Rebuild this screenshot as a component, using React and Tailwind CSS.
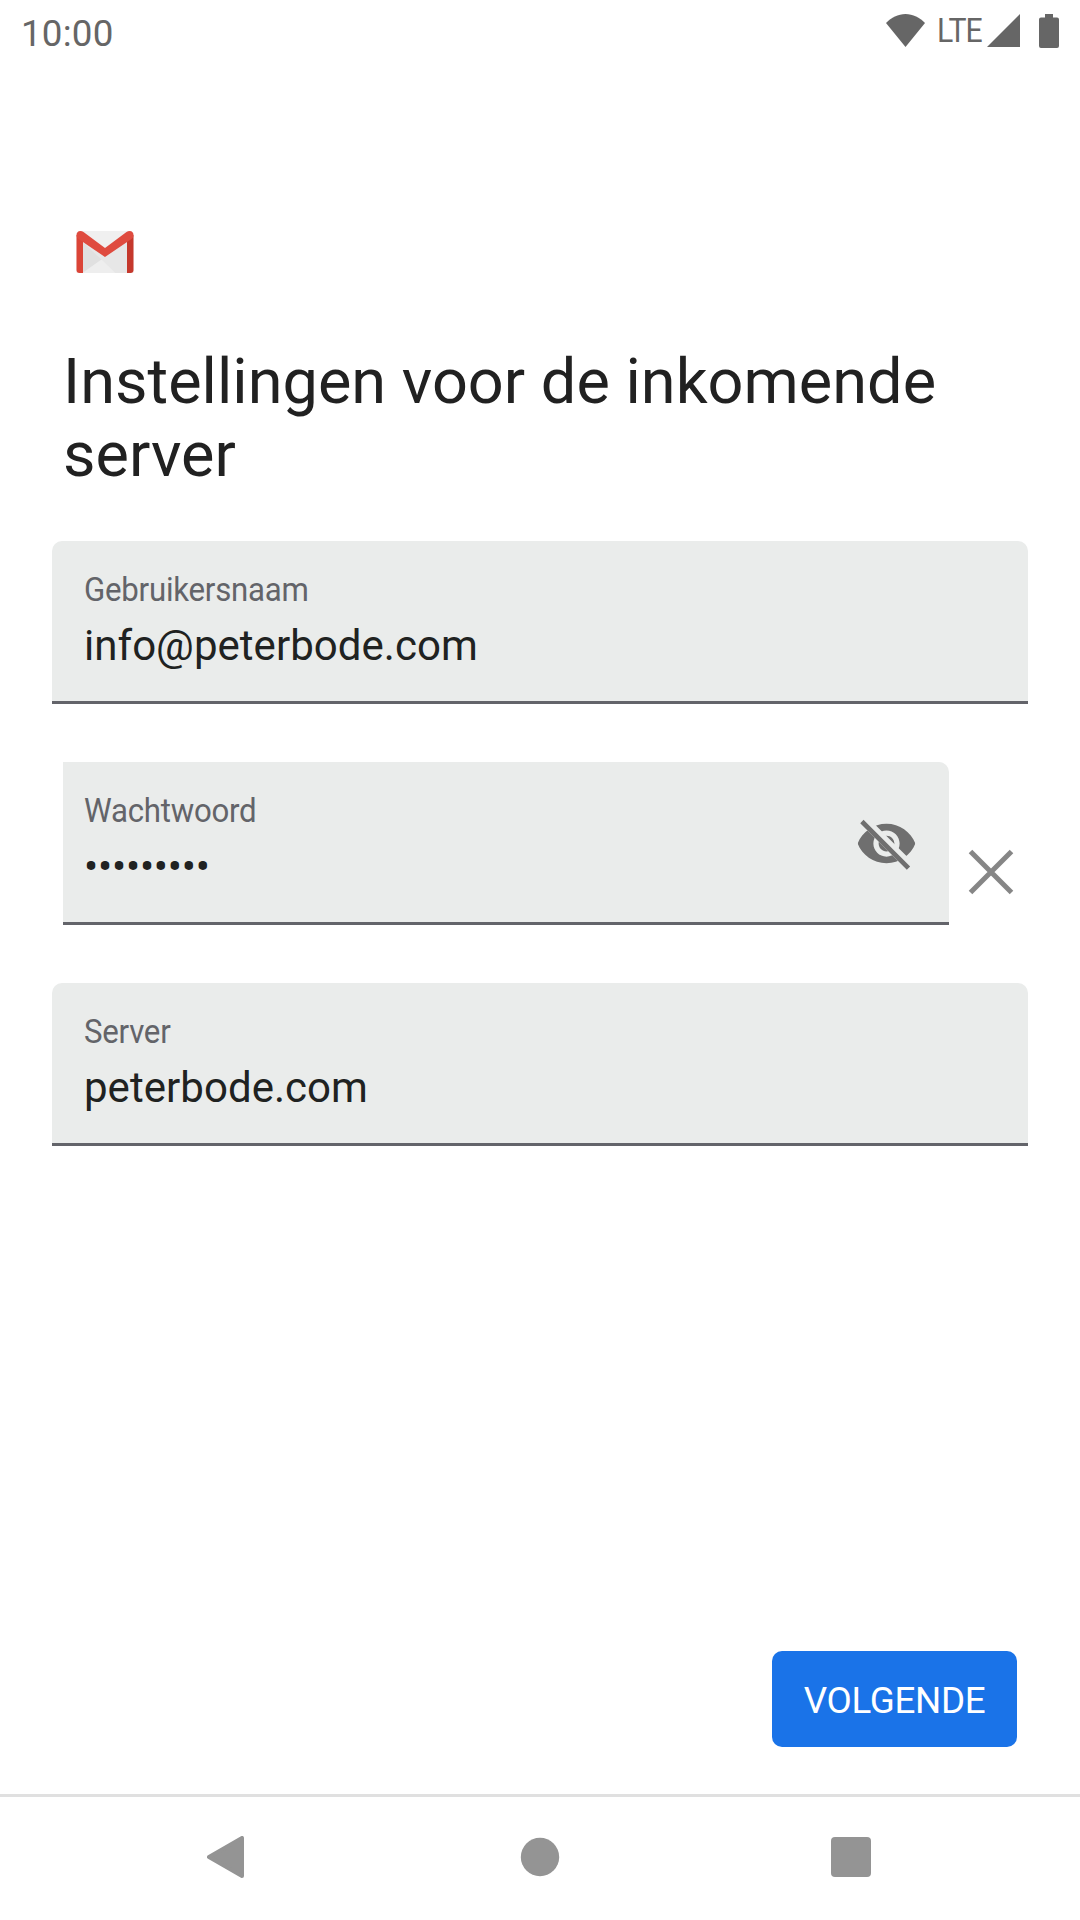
function StatusBar() {
  return (
    <header className="flex h-[63px] justify-between pr-[21px] pl-[21px] text-[#666666]">
      <span className="mt-[12px] text-[36.75px] leading-[43px] tracking-[0.2px]">10:00</span>
      <div className="flex items-start">
        <svg className="mt-[14px] h-[33px] w-[39px]" viewBox="0 0 39 33" fill="currentColor">
          <path d="M19.5 33 0 9C5.400 3.500 12 0 19.500 0S33.600 3.500 39 9Z" />
        </svg>
        <span className="mt-[12px] ml-[12px] w-[47px] origin-left scale-x-[0.93] text-[32.500px] leading-[38px] tracking-[-0.9px]">LTE</span>
        <svg className="mt-[14px] ml-[3px] h-[33px] w-[33px]" viewBox="0 0 33 33" fill="currentColor">
          <path d="M33 0V33H0Z" />
        </svg>
        <svg className="mt-[14px] ml-[19px] h-[34px] w-[20px]" viewBox="0 0 20 34" fill="currentColor">
          <path d="M6 0H14V3.500H18Q20 3.500 20 5.500V32Q20 34 18 34H2Q0 34 0 32V5.500Q0 3.500 2 3.500H6Z" />
        </svg>
      </div>
    </header>
  );
}

function GmailLogo() {
  return (
    <svg className="mt-[168px] ml-[76px] h-[42px] w-[58px]" viewBox="0 0 57 42">
      <path d="M3 0H54Q57 0 57 3V42H0V3Q0 0 3 0Z" fill="#f0f0f0" />
      <path d="M6 11 28.500 25.500 51 10V42H6Z" fill="#e7e7e7" />
      <path d="M6 11 25 28.500 6 42Z" fill="#e0e0e0" />
      <path d="M6 42 25 28.500 39 42Z" fill="#eeeeee" />
      <path d="M0 4 6.500 8V42H3Q0 42 0 39Z" fill="#db4437" />
      <path d="M57 4 50.500 8V42H54Q57 42 57 39Z" fill="#c5382c" />
      <path d="M0 4.500Q0 0 4 0 5.500 0 7 1L28.500 17 50 1Q51.500 0 53 0 57 0 57 4.500 57 6.500 55 8L28.500 26 2 8Q0 6.500 0 4.500Z" fill="#df4b3f" />
    </svg>
  );
}

function Field({ label, value, className, valueClassName = "", children }) {
  return (
    <div className={`flex h-[163px] items-start justify-between border-b-[3px] border-[#63646a] bg-[#eaeceb] pt-[31px] ${className}`}>
      <div>
        <div className="origin-left scale-x-[0.96] text-[32.500px] leading-[37px] tracking-[-0.25px] text-[#636469]">{label}</div>
        <div className={`mt-[12px] text-[42px] leading-[49px] text-[#202221] ${valueClassName}`}>{value}</div>
      </div>
      {children}
    </div>
  );
}

function HiddenEye() {
  return (
    <svg className="mt-[19px] mr-[31px] size-[63px]" viewBox="0 0 24 24">
      <clipPath id="eye-cut">
        <path d="M2 4.270 19.730 22 22.270 19.460 4.540 1.730V1H23V23H1V4.270Z" />
      </clipPath>
      <path d="M3.270 4.270 19.740 20.740" stroke="#6f6f6f" strokeWidth="1.800" strokeLinecap="square" />
      <path
        clipPath="url(#eye-cut)"
        fill="#6f6f6f"
        d="M12 4.500C7 4.500 2.730 7.610 1 12c1.730 4.390 6 7.500 11 7.500s9.270-3.110 11-7.500c-1.730-4.390-6-7.500-11-7.500zM12 17c-2.760 0-5-2.240-5-5s2.240-5 5-5 5 2.240 5 5-2.240 5-5 5zm0-8c-1.660 0-3 1.340-3 3s1.340 3 3 3 3-1.340 3-3-1.340-3-3-3z"
      />
    </svg>
  );
}

function NavBar() {
  return (
    <nav className="flex h-[126px] border-t-[3px] border-[#e0e0e0] pl-[207px]">
      <svg className="mt-[39px] h-[42px] w-[37px]" viewBox="0 0 37 42">
        <path d="M2 21 35 2V40Z" fill="#949494" stroke="#949494" strokeWidth="4" strokeLinejoin="round" />
      </svg>
      <svg className="mt-[40px] ml-[276px] size-[40px]" viewBox="0 0 40 40">
        <circle cx="20" cy="20" r="19.200" fill="#949494" />
      </svg>
      <div className="mt-[40px] ml-[271px] size-[40px] rounded-[4px] bg-[#949494]" />
    </nav>
  );
}

export default function App() {
  return (
    <div className="flex h-[1920px] w-[1080px] flex-col bg-white font-['Roboto',sans-serif]">
      <StatusBar />
      <main className="flex flex-1 flex-col">
        <GmailLogo />
        <h1 className="mt-[72px] ml-[63px] w-[950px] text-[63px] leading-[73px] tracking-[0.03px] text-[#212121]">
          Instellingen voor de inkomende server
        </h1>
        <form className="mt-[50px] flex flex-col gap-[58px]">
          <Field label="Gebruikersnaam" value="info@peterbode.com" valueClassName="tracking-[0.04px]" className="mx-[52px] rounded-t-[10px] pl-[32px]" />
          <div className="flex pl-[63px]">
            <Field label="Wachtwoord" value="•••••••••" valueClassName="tracking-[-0.2px]" className="w-[886px] rounded-tr-[10px] pl-[21px]">
              <HiddenEye />
            </Field>
            <svg className="mt-[88px] ml-[20px] size-[44px]" viewBox="0 0 44 44" overflow="visible">
              <path d="M1.500 1.500 42.500 42.500M42.500 1.500 1.500 42.500" stroke="#868686" strokeWidth="5" />
            </svg>
          </div>
          <Field label="Server" value="peterbode.com" valueClassName="tracking-[0.04px]" className="mx-[52px] rounded-t-[10px] pl-[32px]" />
        </form>
        <button className="mt-auto mr-[63px] mb-[47px] h-[96px] w-[245px] self-end rounded-[10px] bg-[#1a73e8] pt-[2px] text-[36.75px] leading-[43px] tracking-[-0.35px] text-white">
          VOLGENDE
        </button>
      </main>
      <NavBar />
    </div>
  );
}
